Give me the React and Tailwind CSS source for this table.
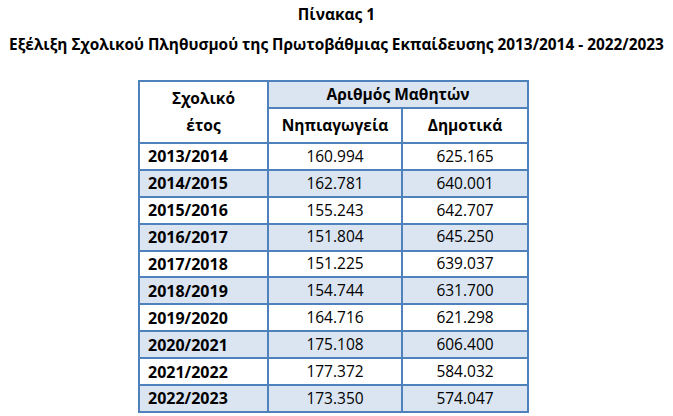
import React from "react";

const rows = [
  ["2013/2014", "160.994", "625.165"],
  ["2014/2015", "162.781", "640.001"],
  ["2015/2016", "155.243", "642.707"],
  ["2016/2017", "151.804", "645.250"],
  ["2017/2018", "151.225", "639.037"],
  ["2018/2019", "154.744", "631.700"],
  ["2019/2020", "164.716", "621.298"],
  ["2020/2021", "175.108", "606.400"],
  ["2021/2022", "177.372", "584.032"],
  ["2022/2023", "173.350", "574.047"],
];

const cell = "border-2 border-[#4f81bd] p-0";

export default function App() {
  return (
    <div
      className="w-[673px] h-[416px] bg-white text-black overflow-hidden"
      style={{ fontFamily: '"Open Sans", "Liberation Sans", sans-serif' }}
    >
      <div className="pt-[3px] text-center font-bold text-[15.5px] leading-[22px]">
        Πίνακας 1
      </div>
      <div className="mt-[9px] text-center font-bold text-[15.4px] leading-[22px]">
        Εξέλιξη Σχολικού Πληθυσμού της Πρωτοβάθμιας Εκπαίδευσης 2013/2014 - 2022/2023
      </div>

      <table className="mt-[24px] ml-[138px] border-collapse text-[15.5px]">
        <thead>
          <tr className="h-[27px]">
            <th
              rowSpan={2}
              className={`${cell} w-[129px] bg-white font-bold leading-[27px] align-middle`}
            >
              Σχολικό
              <br />
              έτος
            </th>
            <th colSpan={2} className={`${cell} bg-[#dbe5f1] font-bold`}>
              Αριθμός Μαθητών
            </th>
          </tr>
          <tr className="h-[35px]">
            <th className={`${cell} w-[134px] font-bold`}>Νηπιαγωγεία</th>
            <th className={`${cell} w-[126px] font-bold`}>Δημοτικά</th>
          </tr>
        </thead>
        <tbody>
          {rows.map(([year, a, b], i) => (
            <tr
              key={year}
              className={`h-[26.9px] ${i % 2 === 1 ? "bg-[#dbe5f1]" : "bg-white"}`}
            >
              <td className={`${cell} pl-[8px] font-bold text-left text-[16px]`}>{year}</td>
              <td className={`${cell} text-center`}>{a}</td>
              <td className={`${cell} text-center`}>{b}</td>
            </tr>
          ))}
        </tbody>
      </table>
    </div>
  );
}
